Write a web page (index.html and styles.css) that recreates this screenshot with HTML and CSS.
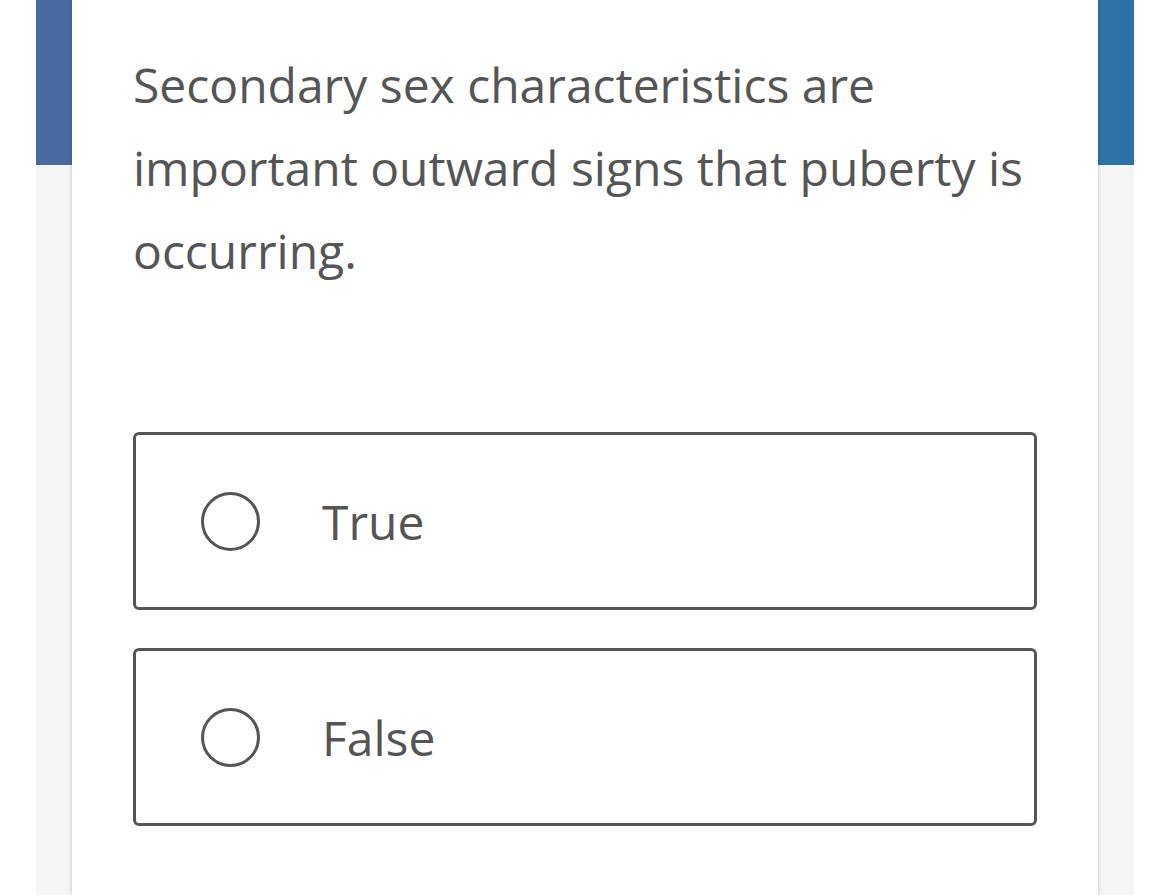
FILE: index.html
```html
<!DOCTYPE html>
<html lang="en">
<head>
  <meta charset="UTF-8">
  <meta name="viewport" content="width=device-width, initial-scale=1.0">
  <title>Question</title>
  <link rel="stylesheet" href="styles.css">
</head>
<body>
  <div class="page">
    <!-- Question Card -->
    <div class="card">
      <p class="question">Secondary sex characteristics are important outward signs that puberty is occurring.</p>

      <div class="options">
        <label class="option">
          <span class="radio"></span>
          <span class="option-text">True</span>
        </label>
        <label class="option">
          <span class="radio"></span>
          <span class="option-text">False</span>
        </label>
      </div>
    </div>
  </div>
</body>
</html>
```

FILE: styles.css
```css
* {
  margin: 0;
  padding: 0;
  box-sizing: border-box;
}

body {
  font-family: 'Open Sans', 'Noto Sans', sans-serif;
  background: #fff;
  color: #555;
  overflow: hidden;
}

.page {
  margin: 0 36px;
  padding: 0 36px;
  min-height: 895px;
  background: linear-gradient(to right, #4a6a9f, #2c72a8) no-repeat top left / 100% 165px, #f5f5f5;
}

.card {
  background: #fff;
  min-height: 895px;
  padding: 43px 61px 0 61px;
  box-shadow: 0 0 4px rgba(0, 0, 0, 0.22);
}

.question {
  font-size: 48px;
  line-height: 83px;
  color: #555;
}

.options {
  display: flex;
  flex-direction: column;
  gap: 38px;
  margin-top: 140px;
}

.option {
  display: flex;
  align-items: center;
  height: 178px;
  border: 3px solid #555;
  border-radius: 6px;
  padding-left: 65px;
}

.radio {
  width: 59px;
  height: 59px;
  border: 3px solid #555;
  border-radius: 50%;
  flex-shrink: 0;
}

.option-text {
  font-size: 48px;
  margin-left: 62px;
  color: #555;
}
```
